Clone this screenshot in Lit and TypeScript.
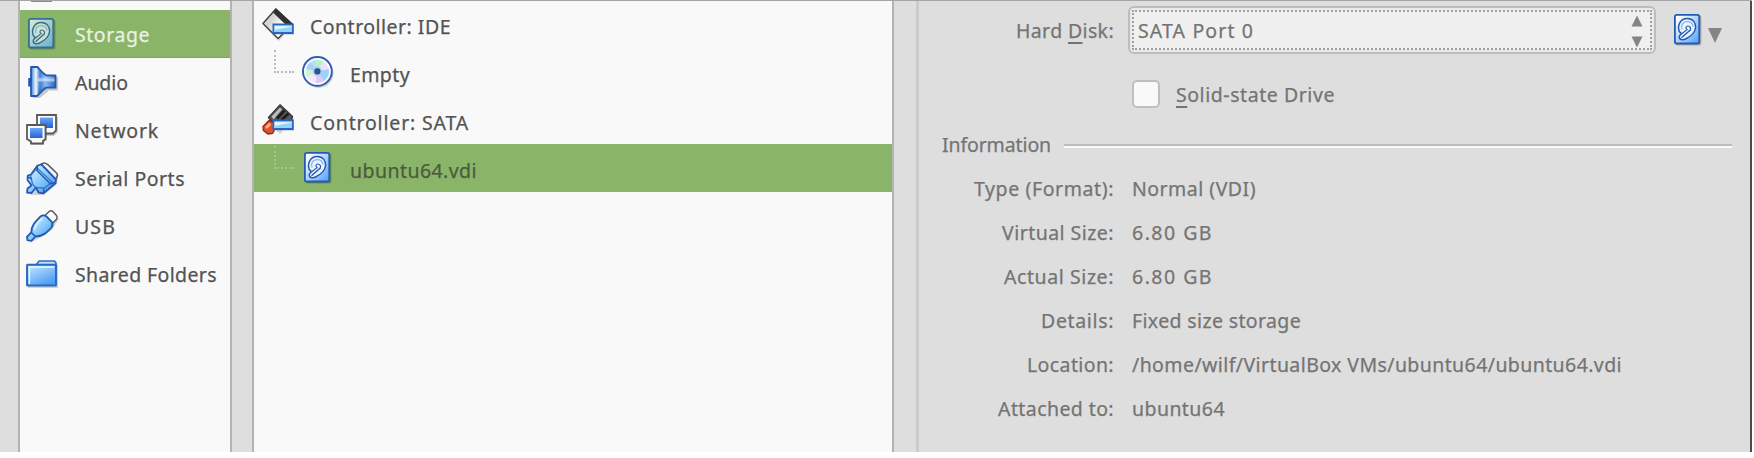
import { LitElement, html, css, svg, nothing } from "lit";
import { customElement, property, query } from "lit/decorators.js";

/** A single-line label whose tracking is adjusted so that it takes the given width. */
@customElement("fit-label")
class FitLabel extends LitElement {
  @property() text = "";
  @property({ type: Number }) width = 0;
  /** Index of the mnemonic letter, -1 for none. */
  @property({ type: Number }) key = -1;
  @query(".t") private el!: HTMLSpanElement;

  static styles = css`
    :host { display: inline-block; white-space: pre; }
    .t { display: inline-block; }
    .u { text-decoration: underline; text-decoration-thickness: 2px; text-underline-offset: 4px; text-decoration-skip-ink: none; }
  `;

  updated() {
    const el = this.el;
    el.style.letterSpacing = "0";
    const natural = el.getBoundingClientRect().width;
    el.style.letterSpacing = `${(this.width - natural) / this.text.length}px`;
  }

  render() {
    const { text, key } = this;
    return html`<span class="t">${key < 0
      ? text
      : html`${text.slice(0, key)}<span class="u">${text[key]}</span>${text.slice(key + 1)}`}</span>`;
  }
}

const disk = (c: { edge: string; a: string; b: string; face: string; mid: string }, id: string) => svg`
  <defs><linearGradient id=${id} x1="0" y1="0" x2="1" y2="1">
    <stop offset=".1" stop-color=${c.a}/><stop offset="1" stop-color=${c.b}/>
  </linearGradient></defs>
  <rect x="3.4" y="1.6" width="26" height="30" rx="2" fill="#000" opacity=".22"/>
  <rect x="2.9" y=".9" width="24.4" height="28.6" rx="1.8" fill="url(#${id})" stroke=${c.edge} stroke-width="1.8"/>
  <path d="M7.300 17.500C5 11 8.500 4.600 15.300 4.600C21 4.600 24 9 23.600 13.500C23 18.500 18 22.800 13.500 25C10.500 26.500 6.800 25.500 7.300 22.500C7.600 20.800 9.500 20.400 9.300 19.500Z" fill=${c.face} stroke=${c.edge} stroke-width="1.500"/>
  <path d="M10 15.500C8.500 11 11 7.400 15.300 7.400C18.500 7.400 21 9.700 20.900 12.500" fill="none" stroke=${c.mid} stroke-width="1.500"/>
  <path d="M10 23.300L18 16.300" fill="none" stroke=${c.edge} stroke-width="1.500" stroke-linecap="round"/>
  <path d="M9.800 19.700L15 15.600C13.400 14.500 13.700 12.300 15.500 12C18 11.800 19.500 14.500 18 16.300" fill="none" stroke=${c.edge} stroke-width="1.200" stroke-linecap="round"/>
`;

const blueGrad = (id: string) => svg`<defs><linearGradient id=${id} x1="0" y1="0" x2="1" y2="1">
  <stop offset=".1" stop-color="#d8f2ff"/><stop offset=".55" stop-color="#82c8fb"/><stop offset="1" stop-color="#3c86e4"/>
</linearGradient></defs>`;

const slot = svg`
  <rect x="10.500" y="15.500" width="21.300" height="10.700" fill="#2a66bd"/>
  <rect x="12.300" y="17.500" width="17.700" height="6.500" fill="#dff5ff"/>
  <path d="M12.300 24V22L30 18.500V24Z" fill="#8ed6fa"/>`;

const icons: Record<string, unknown> = {
  disk: disk({ edge: "#2459b4", a: "#ffffff", b: "#4fa0fa", face: "#eaf4ff", mid: "#8fbdf2" }, "g"),
  diskSel: disk({ edge: "#33708d", a: "#d3e6d2", b: "#65b0cd", face: "#cfe2d2", mid: "#8dbcbd" }, "g"),
  audio: svg`
    <defs><linearGradient id="g"><stop offset="0" stop-color="#3a7ed8"/><stop offset=".2" stop-color="#f4fbff"/><stop offset=".36" stop-color="#4580d4"/><stop offset=".6" stop-color="#8cc4f5"/><stop offset="1" stop-color="#2a62c0"/></linearGradient>
    <linearGradient id="h" x1="0" y1="0" x2="0" y2="1"><stop offset=".3" stop-color="#fff" stop-opacity="0"/><stop offset=".45" stop-color="#e6f5ff" stop-opacity=".7"/><stop offset=".6" stop-color="#2458b2" stop-opacity="0"/><stop offset="1" stop-color="#1e50a8" stop-opacity=".5"/></linearGradient></defs>
    <path d="M6 3L13 2.500L23 11H32V24.500H23L14 32H7Z" fill="#000" opacity=".2"/>
    <path d="M5 12H2.200V20.500H5Z" fill="#2458ae"/>
    <path d="M5 1H11.500C13.500 3 17 8 20.500 9.300H29.500V21.700H20.500C17 23 14 28 11 30H5Z" fill="url(#g)" stroke="#2458b2" stroke-width="1.800" stroke-linejoin="round"/>
    <path d="M12 3C14 5 17.500 9.500 20.500 10.200H28.500V20.800H20.500C17.500 22 14 26 12 28Z" fill="url(#h)"/>`,
  network: svg`
    <defs><linearGradient id="g" x1="0" y1="0" x2="0" y2="1"><stop offset="0" stop-color="#66a8f8"/><stop offset="1" stop-color="#2860d4"/></linearGradient></defs>
    <path d="M12 3H32V18L28 22H12Z" fill="#000" opacity=".18"/>
    <path d="M11 1H30V16.500L27 19.500H11Z" fill="#fafafa" stroke="#595959" stroke-width="1.800"/>
    <rect x="14" y="3.500" width="13" height="10.500" fill="url(#g)"/>
    <path d="M2 12H21V27H19L17 31H7L4 29Z" fill="#000" opacity=".18"/>
    <path d="M1 11H19.500V25L17 27V29.500H5V27.500L1 25Z" fill="#fafafa" stroke="#595959" stroke-width="1.800"/>
    <rect x="4" y="14" width="12.500" height="10" fill="url(#g)"/>`,
  serial: svg`${blueGrad("g")}
    <path d="M14 4L19 1.500L32 15L31 22L18 33H5Z" fill="#000" opacity=".16"/>
    <path d="M14.500 2.500L18 .9C20 .7 21 1.700 31 11.500C32 13 31.500 14.600 30 16.500L27 17L14 5Z" fill="#f6f6f6" stroke="#5c5c5c" stroke-width="1.500"/>
    <path d="M11.500 3.500L15.500 2.500L30 17.500L29.500 21.300L17.500 31.300L12.500 30.500L10 25.500L5.500 31L1 30.500L1.500 26.500L5.500 23.500L1.500 18L1.800 13.500L5 12.500Z" fill="url(#g)" stroke="#2359b3" stroke-width="1.800" stroke-linejoin="round"/>
    <path d="M11 6L4.500 13.500L6.500 22L9.500 25.500L18.500 26L26 20Z" fill="none" stroke="#2c66c2" stroke-width="1.400" opacity=".8"/>
    <path d="M11.500 4L11 8.500L24.500 22L29.500 20.500M18 30.500L17.500 26.500M2 15L6 17" fill="none" stroke="#2359b3" stroke-width="1.500"/>`,
  usb: svg`${blueGrad("g")}
    <path d="M19 5L25 1L33 9L26 20L10 30L4 33Z" fill="#000" opacity=".14"/>
    <path d="M18.500 6L23 1.500C24.500 .5 26 .8 27 1.800L30.500 5.500C31.500 6.800 31.300 8 30.500 9.200L26 13.800Z" fill="#fafafa" stroke="#5c5c5c" stroke-width="1.500"/>
    <path d="M14.500 6.500C16.500 5 18.500 5 20.500 6.500L25.500 11.500C27 13.500 27 15.500 25.500 17.500C21 22.500 17 26.500 9.500 26.500L5.500 30.800L1.500 30.300L1 26.800L5.300 22.500C5 15.500 10 11 14.500 6.500Z" fill="url(#g)" stroke="#2359b3" stroke-width="1.800"/>
    <path d="M8.500 20C9 15.500 12 12 16 8.500" fill="none" stroke="#fff" stroke-width="2" opacity=".6"/>
    <path d="M5.300 22.500L9.500 26.500" stroke="#2359b3" stroke-width="1.600"/>`,
  folder: svg`
    <defs><linearGradient id="g" x1="0" y1="0" x2=".6" y2="1"><stop offset="0" stop-color="#c9ecff"/><stop offset="1" stop-color="#4e9df5"/></linearGradient></defs>
    <path d="M2 7H32V30H2Z" fill="#000" opacity=".16"/>
    <path d="M10.500 6.500L13 3H28.500L30 5V9H10Z" fill="#bfdcf8" stroke="#2f6cc4" stroke-width="1.600"/>
    <rect x="1" y="6.700" width="29" height="20.800" rx=".6" fill="url(#g)" stroke="#2a66c2" stroke-width="1.900"/>
    <path d="M3.400 26V9H28" fill="none" stroke="#e6f7ff" stroke-width="1.400"/>`,
  ide: svg`
    <defs><linearGradient id="g" x1="0" y1="0" x2="1" y2=".6"><stop offset="0" stop-color="#fff"/><stop offset=".35" stop-color="#d2d2d2"/><stop offset=".7" stop-color="#fff"/></linearGradient></defs>
    <path d="M2 18L15 2L31 16L17 33Z" fill="#000" opacity=".15"/>
    <path d="M13.800 1L30.500 16.500L16 30.500L1 15.500Z" fill="url(#g)" stroke="#484848" stroke-width="1.600" stroke-linejoin="round"/>
    <path d="M13.800 .3L31.500 16.500H23.500L11 4.500Z" fill="#303030"/>${slot}`,
  sata: svg`
    <path d="M5 18L19 2L32 15L18 30Z" fill="#000" opacity=".15"/>
    <path d="M6.500 13.500L18 .9L30.500 12.500L29 17.500H10Z" fill="#565656" stroke="#3b3b3b" stroke-width="1.500" stroke-linejoin="round"/>
    <path d="M9.500 12.500L18 3.500L20 5.500L11.500 15.500Z" fill="#bcbcbc"/>
    <path d="M15 14.500L22.500 6.500M19.500 16L26.500 9.500" stroke="#1c1c1c" stroke-width="2.600"/>
    <path d="M7 16.500L1 22.500L1.300 26.500L6 30L10.500 29.500L12 27V19Z" fill="#e2502a" stroke="#8c2a14" stroke-width="1.300"/>
    <path d="M3 23L7.500 18.500L9 21L5 25Z" fill="#ffab8c"/>${slot}`,
  cd: svg`
    <circle cx="16.500" cy="17" r="15" fill="#000" opacity=".16"/>
    <circle cx="15.400" cy="15.400" r="14.400" fill="#d7e6fb" stroke="#2b5cb0" stroke-width="1.900"/>
    <path d="M15.400 15.400L8 5A13 13 0 0 1 14 2.500Z" fill="#b9dcfb"/>
    <path d="M15.400 15.400L14 2.500A13 13 0 0 1 22 4.500Z" fill="#b3f5c0"/>
    <path d="M15.400 15.400L22 4.500A13 13 0 0 1 27.500 13Z" fill="#efe0fb"/>
    <path d="M15.400 15.400L3 13A13 13 0 0 1 8 5Z" fill="#a9d0fb"/>
    <path d="M15.400 15.400L4 21.500A13 13 0 0 1 3 13Z" fill="#c6f6d2"/>
    <path d="M15.400 15.400L13.500 27.500A13 13 0 0 1 4 21.500Z" fill="#f4e8fb"/>
    <path d="M15.400 15.400L22.500 25.500A13 13 0 0 1 13.500 27.500Z" fill="#dfc9f5"/>
    <path d="M15.400 15.400L27.500 13A13 13 0 0 1 22.500 25.500Z" fill="#9dd3fb"/>
    <circle cx="15.400" cy="15.400" r="12.400" fill="none" stroke="#fff" stroke-width="1.800" opacity=".8"/>
    <circle cx="15.400" cy="15.400" r="4.600" fill="#a9caf2"/>
    <circle cx="15.400" cy="15.400" r="2.400" fill="#31558f" stroke="#1f4f9f" stroke-width="1.300"/>`,
};

@customElement("ui-icon")
class UiIcon extends LitElement {
  @property() name = "";
  static styles = css`
    :host { display: block; width: 32px; height: 32px; flex: none; }
    svg { display: block; overflow: visible; }
  `;
  render() {
    return html`<svg width="32" height="32" viewBox="0 0 32 32">${icons[this.name]}</svg>`;
  }
}

const sections = [
  { icon: "diskSel", text: "Storage", width: 75, selected: true },
  { icon: "audio", text: "Audio", width: 53 },
  { icon: "network", text: "Network", width: 84 },
  { icon: "serial", text: "Serial Ports", width: 110 },
  { icon: "usb", text: "USB", width: 41 },
  { icon: "folder", text: "Shared Folders", width: 142 },
];

const devices = [
  { icon: "ide", text: "Controller: IDE", width: 141 },
  { icon: "cd", text: "Empty", width: 60, child: true },
  { icon: "sata", text: "Controller: SATA", width: 159 },
  { icon: "disk", text: "ubuntu64.vdi", width: 127, child: true, selected: true },
];

const info = [
  { name: "Type (Format):", nameWidth: 140, value: "Normal (VDI)", width: 124 },
  { name: "Virtual Size:", nameWidth: 112, value: "6.80 GB", width: 81 },
  { name: "Actual Size:", nameWidth: 110, value: "6.80 GB", width: 81 },
  { name: "Details:", nameWidth: 73, value: "Fixed size storage", width: 169 },
  { name: "Location:", nameWidth: 87, value: "/home/wilf/VirtualBox VMs/ubuntu64/ubuntu64.vdi", width: 490 },
  { name: "Attached to:", nameWidth: 116, value: "ubuntu64", width: 93 },
];

@customElement("app-root")
class AppRoot extends LitElement {
  static styles = css`
    :host {
      display: block; height: 458px; background: #fff; overflow: hidden;
      font: 19.500px/48px "Noto Sans", "Open Sans", sans-serif; color: #535353;
      -webkit-text-stroke: .25px currentColor;
    }
    * { box-sizing: border-box; }
    .window {
      display: flex; width: 1752px; height: 452px; background: #dedede;
      border-right: 2px solid #4a4a4a; padding-left: 18px; position: relative;
    }
    .topline { position: absolute; left: 0; right: -2px; top: 0; height: 1px; background: #a5a5a5; }
    .list { width: 214px; background: #f9f9f9; border: solid #b3b3b3; border-width: 0 2px; margin-right: 20px; }
    .peek { height: 10px; padding-left: 11px; }
    .peek::before { content: ""; display: block; width: 21px; height: 2px; background: #8b8b8b; }
    .section { display: flex; align-items: center; gap: 17px; height: 48px; padding-left: 6px; }
    .section fit-label { padding-top: 1px; }
    .section.selected { background: #8ab468; color: #e9f2e1; box-shadow: inset 0 -1px #7fa760; }
    .tree { width: 642px; background: #f9f9f9; border: solid #b3b3b3; border-width: 0 2px; margin-right: 22px; }
    .device { display: flex; height: 48px; padding: 8px 0 0 8px; }
    .device.selected { background: #8ab468; color: #4b5a3f; }
    .device fit-label { margin: -5.500px 0 0 16px; }
    .branch {
      width: 20px; height: 23px; margin: -6px 7px 0 12px; flex: none;
      border: dotted #b9b9b9; border-width: 0 0 2px 2px;
    }
    .child ui-icon { margin-left: 1px; }
    .selected .branch { border-color: #a9c193; }
    .details { flex: 1; border-left: 3px solid #cbcbcb; color: #747474; display: flex; flex-direction: column; }
    .port { display: grid; grid-template-columns: 199px 538px 51px 16px; height: 53px; padding-top: 6px; }
    .port .name { text-align: right; padding-right: 4px; line-height: 50px; }
    .combo {
      height: 48px; border: 2px solid #bdbdbd; border-radius: 6px; background: #e9e9e9; padding: 2px;
      margin-left: 10px;
    }
    .focus {
      height: 40px; border: 2px dotted #a2a2a2; background: #f0f0f0; display: flex; justify-content: space-between;
      line-height: 38px; padding: 0 7px 0 4px;
    }
    .steps { display: flex; flex-direction: column; gap: 9px; padding-top: 3px; }
    .steps svg, .drop svg { display: block; }
    .port ui-icon { margin: 8px 0 0 16px; }
    .ssd { display: flex; height: 28px; margin: 27px 0 0 213px; line-height: 30px; gap: 16px; }
    .box { width: 28px; height: 28px; border: 2px solid #bfbfbf; border-radius: 5px; background: #f9f9f9; }
    .legend { display: flex; height: 44px; margin: 15px 18px 0 22px; line-height: 44px; gap: 13px; }
    .legend fit-label { padding-left: 1px; }
    .rule { flex: 1; height: 4px; margin-top: 21px; background: #fafafa; border-top: 2px solid #bdbdbd; }
    .info { display: grid; grid-template-columns: 195px auto; column-gap: 18px; line-height: 43px; }
    .info .name { text-align: right; }
    .info > * { height: 44px; }
  `;

  render() {
    return html`
      <div class="window">
        <div class="topline"></div>
        <div class="list">
          <div class="peek"></div>
          ${sections.map((s) => html`
            <div class="section ${s.selected ? "selected" : ""}">
              <ui-icon name=${s.icon}></ui-icon>
              <fit-label .text=${s.text} .width=${s.width}></fit-label>
            </div>`)}
        </div>
        <div class="tree">
          ${devices.map((d) => html`
            <div class="device ${d.child ? "child" : ""} ${d.selected ? "selected" : ""}">
              ${d.child ? html`<span class="branch"></span>` : nothing}
              <ui-icon name=${d.icon}></ui-icon>
              <fit-label .text=${d.text} .width=${d.width}></fit-label>
            </div>`)}
        </div>
        <div class="details">
          <div class="port">
            <div class="name"><fit-label text="Hard Disk:" .width=${98} .key=${5}></fit-label></div>
            <div class="combo"><div class="focus">
              <fit-label text="SATA Port 0" .width=${116}></fit-label>
              <div class="steps">
                <svg width="12" height="12"><path d="M6 .5L11.500 11.500H.5Z" fill="#848484"/></svg>
                <svg width="12" height="12"><path d="M6 11.500L11.500 .5H.5Z" fill="#848484"/></svg>
              </div>
            </div></div>
            <ui-icon name="disk"></ui-icon>
            <div class="drop"><svg width="16" height="38"><path d="M1 22H15L8 37Z" fill="#848484"/></svg></div>
          </div>
          <div class="ssd"><span class="box"></span><fit-label text="Solid-state Drive" .width=${159} .key=${0}></fit-label></div>
          <div class="legend"><fit-label text="Information" .width=${109}></fit-label><span class="rule"></span></div>
          <div class="info">
            ${info.map((r) => html`
              <div class="name"><fit-label .text=${r.name} .width=${r.nameWidth}></fit-label></div>
              <div><fit-label .text=${r.value} .width=${r.width}></fit-label></div>`)}
          </div>
        </div>
      </div>`;
  }
}
